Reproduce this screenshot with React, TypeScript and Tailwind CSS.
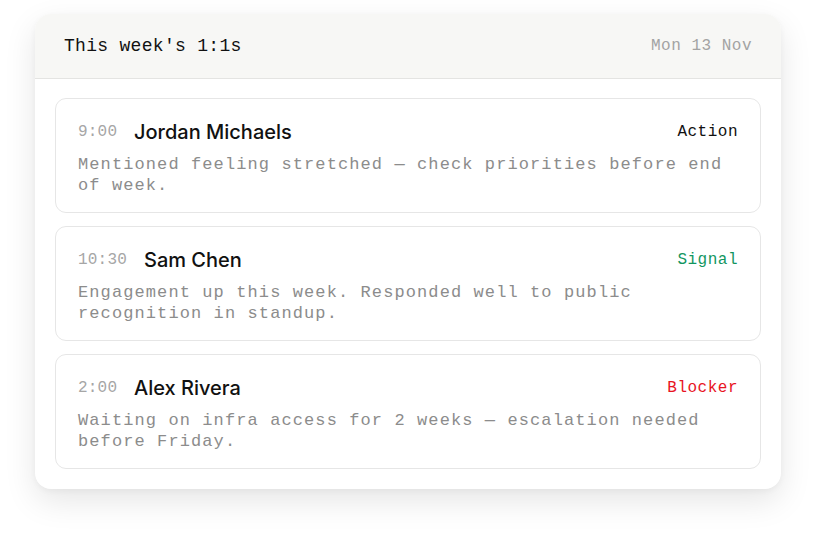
import React from "react"

interface Meeting {
  time: string
  name: string
  tag: string
  tagClass: string
  note: string
}

const meetings: Meeting[] = [
  {
    time: "9:00",
    name: "Jordan Michaels",
    tag: "Action",
    tagClass: "text-[#111111]",
    note: "Mentioned feeling stretched — check priorities before end of week.",
  },
  {
    time: "10:30",
    name: "Sam Chen",
    tag: "Signal",
    tagClass: "text-[#12965f]",
    note: "Engagement up this week. Responded well to public recognition in standup.",
  },
  {
    time: "2:00",
    name: "Alex Rivera",
    tag: "Blocker",
    tagClass: "text-[#e8141f]",
    note: "Waiting on infra access for 2 weeks — escalation needed before Friday.",
  },
]

const mono = "font-['Liberation_Mono','DejaVu_Sans_Mono',monospace]"

export default function App() {
  return (
    <div className="min-h-[544px] bg-white pt-[14px]">
      <div className="mx-auto w-[746px] overflow-hidden rounded-[16px] bg-white shadow-[0_12px_32px_rgba(0,0,0,0.10),0_2px_6px_rgba(0,0,0,0.04)]">
        <div className="flex h-[65px] items-center justify-between border-b border-[#e4e4e2] bg-[#f7f7f5] px-[29px]">
          <span className={`${mono} text-[18px] tracking-[0.3px] text-[#111111]`}>This week's 1:1s</span>
          <span className={`${mono} text-[16px] tracking-[0.5px] text-[#a3a3a3]`}>Mon 13 Nov</span>
        </div>
        <div className="flex flex-col gap-[13px] p-[20px] pt-[19px]">
          {meetings.map((m) => (
            <div
              key={m.name}
              className="rounded-[11px] border border-[#e6e6e6] bg-white px-[22px] pb-[16px] pt-[20px]"
            >
              <div className="flex h-[26px] items-center">
                <span className={`${mono} w-[56px] shrink-0 text-[16px] tracking-[0.2px] text-[#a6a6a6] ${m.time.length > 4 ? "w-[66px]" : ""}`}>
                  {m.time}
                </span>
                <span className="font-['Inter',sans-serif] text-[20px] font-medium text-[#111111]">
                  {m.name}
                </span>
                <span className={`${mono} ml-auto text-[16px] tracking-[0.5px] ${m.tagClass}`}>{m.tag}</span>
              </div>
              <p className={`${mono} mt-[9px] text-[17px] leading-[21px] tracking-[1.1px] text-[#8c8c8c]`}>
                {m.note}
              </p>
            </div>
          ))}
        </div>
      </div>
    </div>
  )
}
